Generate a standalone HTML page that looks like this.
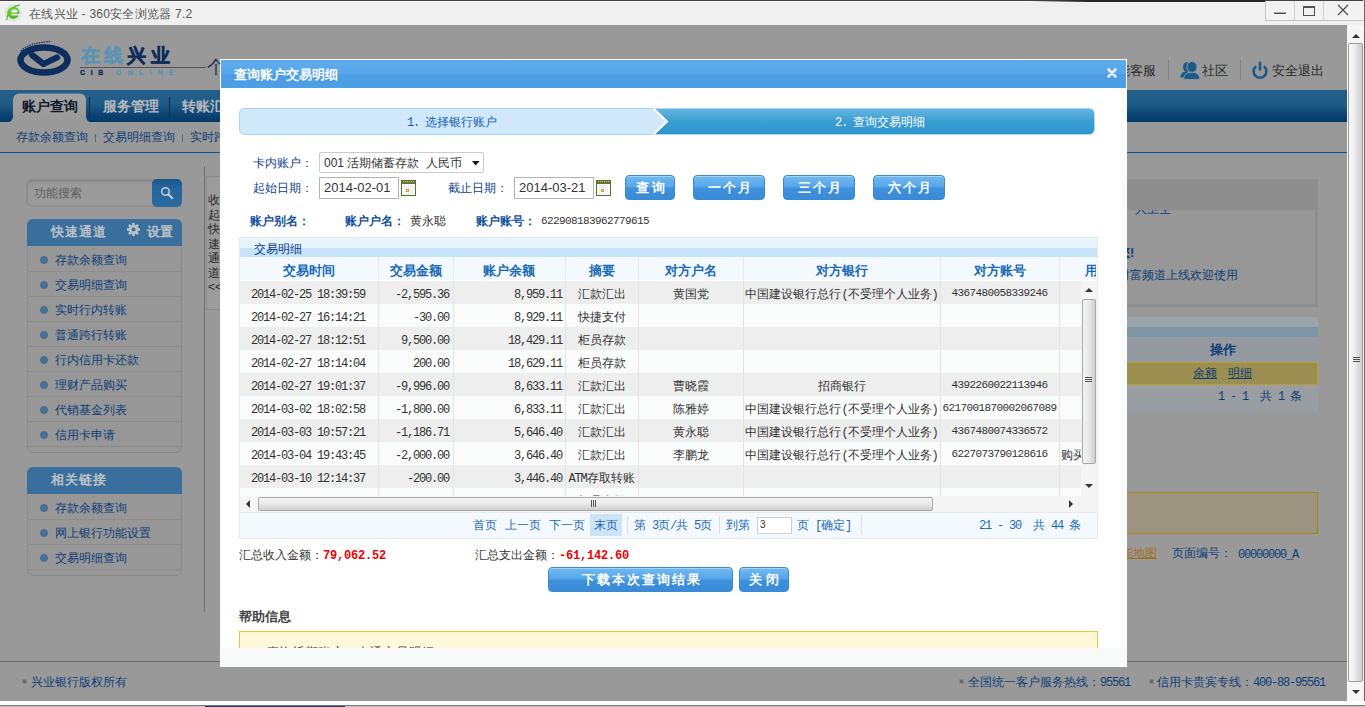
<!DOCTYPE html>
<html><head><meta charset="utf-8">
<style>
*{box-sizing:border-box}
html,body{margin:0;padding:0}
body{width:1365px;height:707px;overflow:hidden;position:relative;background:#fff;font-family:"Liberation Sans",sans-serif;font-size:12px;color:#333}
.a{position:absolute}
.t{position:absolute;white-space:nowrap;line-height:1}
.m{font-family:"Liberation Mono",monospace;letter-spacing:-1.2px}
</style></head><body>

<div class="a" style="left:0px;top:0px;width:1365px;height:25px;background:#f0f0f0;"></div>
<div class="a" style="left:0px;top:0px;width:1365px;height:1px;background:#444;"></div>
<div class="a" style="left:0px;top:1px;width:1365px;height:1px;background:#fafafa;"></div>
<div class="a" style="left:1030px;top:0px;width:235px;height:2px;background:linear-gradient(90deg,rgba(30,30,30,0),#262626 25%,#262626);"></div>
<svg class="a" style="left:0;top:0" width="26" height="25" viewBox="0 0 26 25">
 <defs><radialGradient id="eg" cx="0.4" cy="0.3" r="0.8"><stop offset="0" stop-color="#8ee048"/><stop offset="1" stop-color="#2cb010"/></radialGradient></defs>
 <circle cx="13.1" cy="12.8" r="7.5" fill="#f4f4f6" stroke="#c4c6d0" stroke-width="0.8"/>
 <circle cx="13.3" cy="12.8" r="6.1" fill="url(#eg)"/>
 <ellipse cx="14.4" cy="10.9" rx="3.2" ry="1.5" fill="#fff"/>
 <rect x="11.6" y="13.9" width="8.5" height="1.5" fill="#fff"/>
 <path d="M6.8 20.2 C7.2 12 12.5 6.2 20 5" fill="none" stroke="#58c828" stroke-width="1.3"/>
</svg>
<div class="t" style="left:29px;top:8px;font-size:12px;color:#555;letter-spacing:0.25px">在线兴业 - 360安全浏览器 7.2</div>
<div class="a" style="left:1265px;top:1px;width:99px;height:20px;background:#f2f2f2;border-left:1px solid #c4c4c4;border-bottom:1px solid #c4c4c4"></div>
<div class="a" style="left:1363px;top:0px;width:1px;height:707px;background:#f0f0f0;"></div>
<div class="a" style="left:1364px;top:0px;width:1px;height:707px;background:#6a6a6a;"></div>
<div class="a" style="left:1294px;top:1px;width:1px;height:19px;background:#d0d0d0;"></div>
<div class="a" style="left:1323px;top:1px;width:1px;height:19px;background:#d0d0d0;"></div>
<div class="a" style="left:1274px;top:13px;width:12px;height:1px;background:#505050;"></div>
<div class="a" style="left:1274px;top:12px;width:12px;height:1px;background:#a0a0a0;"></div>
<div class="a" style="left:1303px;top:6px;width:12px;height:10px;background:transparent;border:1px solid #505050;border-top-width:2px"></div>
<svg class="a" style="left:1337px;top:4px" width="12" height="12" viewBox="0 0 12 12"><path d="M1 1L11 11M11 1L1 11" stroke="#505050" stroke-width="1.3"/></svg>
<div class="a" style="left:0px;top:25px;width:1347px;height:676px;background:#999;"></div>
<svg class="a" style="left:14px;top:40px" width="62" height="40" viewBox="0 0 62 40">
 <ellipse cx="30" cy="20" rx="23.5" ry="12.5" fill="none" stroke="#0d2e5c" stroke-width="6.5"/>
 <path d="M18 15 L29.5 24 L43 17.5" fill="none" stroke="#0d2e5c" stroke-width="6.2" stroke-linejoin="round" stroke-linecap="round"/>
 <path d="M7 11 Q14 3 36 1.5" fill="none" stroke="#0d2e5c" stroke-width="1.3" stroke-dasharray="1.5 1"/>
</svg>
<div class="t" style="left:81px;top:46px;font-size:19px;color:#5a94b4;font-weight:bold;letter-spacing:4.2px;-webkit-text-stroke:0.5px currentColor">在线<span style="color:#0c2c5a">兴业</span></div>
<div class="a" style="left:80px;top:67px;width:126px;height:1px;background:#5a524e;"></div>
<div class="t" style="left:80px;top:69px;font-size:7px;color:#0c2c5a;font-weight:bold;letter-spacing:5.6px;-webkit-text-stroke:0.3px currentColor">CIB</div>
<div class="t" style="left:116px;top:69px;font-size:7px;color:#5a94b4;font-weight:bold;letter-spacing:6.2px;-webkit-text-stroke:0.3px currentColor">ONLINE</div>
<div class="t" style="left:207px;top:58px;font-size:18px;color:#1a2f55;">个</div>
<div class="t" style="left:1117px;top:64px;font-size:13px;color:#2a2a2a;">能客服</div>
<div class="a" style="left:1168px;top:60px;width:1px;height:20px;background:#808080;"></div>
<svg class="a" style="left:1180px;top:61px" width="20" height="19" viewBox="0 0 20 19">
 <ellipse cx="6.8" cy="6" rx="3.8" ry="4.8" fill="#1a5a88"/>
 <path d="M0.3 16.5 Q0.8 10.8 6 10.6 L8.5 11 L5 16.5 Z" fill="#1a5a88"/>
 <ellipse cx="12" cy="6" rx="5" ry="5.6" fill="#1a5a88" stroke="#999" stroke-width="0.9"/>
 <path d="M3.6 18.4 Q3.8 11.2 12 11.2 Q19.8 11.2 19.8 18.4 Z" fill="#1a5a88" stroke="#999" stroke-width="0.9"/>
</svg>
<div class="t" style="left:1202px;top:64px;font-size:13px;color:#2a2a2a;">社区</div>
<div class="a" style="left:1240px;top:60px;width:1px;height:20px;background:#808080;"></div>
<svg class="a" style="left:1251px;top:61px" width="18" height="19" viewBox="0 0 18 19">
 <path d="M5.2 5.2 A6.4 6.4 0 1 0 12.8 5.2" fill="none" stroke="#1d5a86" stroke-width="2.6"/>
 <rect x="7.7" y="0.5" width="2.6" height="9" fill="#1d5a86"/>
</svg>
<div class="t" style="left:1272px;top:64px;font-size:13px;color:#2a2a2a;">安全退出</div>
<div class="a" style="left:0px;top:90px;width:1347px;height:32px;background:linear-gradient(#235d89,#225c88 40%,#0a4272 80%,#003866);"></div>
<svg class="a" style="left:8px;top:92px" width="84" height="30" viewBox="0 0 84 30"><defs><linearGradient id="tg" x1="0" y1="0" x2="0" y2="1"><stop offset="0" stop-color="#a3a3a3"/><stop offset="1" stop-color="#999"/></linearGradient></defs><path d="M1 30 Q5 29 5 24 L5 8 Q5 1.5 12 1.5 L71 1.5 Q78 1.5 78 8 L78 24 Q78 29 82 30 Z" fill="url(#tg)"/></svg>
<div class="t" style="left:22px;top:99px;font-size:14px;color:#0e1a2c;font-weight:bold;">账户查询</div>
<div class="a" style="left:89px;top:97px;width:1px;height:20px;background:#0a2a4a;"></div>
<div class="t" style="left:103px;top:99px;font-size:14px;color:#b4b8bc;font-weight:bold;">服务管理</div>
<div class="a" style="left:169px;top:97px;width:1px;height:20px;background:#0a2a4a;"></div>
<div class="t" style="left:182px;top:99px;font-size:14px;color:#b4b8bc;font-weight:bold;">转账汇款</div>
<div class="t" style="left:16px;top:131px;font-size:12px;color:#0e3f78;">存款余额查询</div>
<div class="a" style="left:95px;top:134px;width:1px;height:8px;background:#4a6a8a;"></div>
<div class="t" style="left:103px;top:131px;font-size:12px;color:#0e3f78;">交易明细查询</div>
<div class="a" style="left:182px;top:134px;width:1px;height:8px;background:#4a6a8a;"></div>
<div class="t" style="left:190px;top:131px;font-size:12px;color:#0e3f78;">实时跨行</div>
<div class="a" style="left:0px;top:152px;width:1347px;height:1px;background:#17548e;"></div>
<div class="a" style="left:0px;top:153px;width:1347px;height:1px;background:#8e969e;"></div>
<div class="a" style="left:26px;top:179px;width:156px;height:28px;background:#9a9a9a;border-radius:6px;box-shadow:inset 0 1px 3px #7a7a7a;border:1px solid #8e8e8e"></div>
<div class="t" style="left:34px;top:187px;font-size:12px;color:#5e5e5e;">功能搜索</div>
<div class="a" style="left:152px;top:179px;width:30px;height:28px;background:linear-gradient(#1a5688,#2566a0 30%,#2a6aa0);border-radius:5px"></div>
<svg class="a" style="left:158px;top:184px" width="18" height="18" viewBox="0 0 18 18"><circle cx="7.5" cy="7.5" r="3.8" fill="none" stroke="#c4ccd4" stroke-width="1.6"/><path d="M10.3 10.3L14.3 14.3" stroke="#c4ccd4" stroke-width="2" stroke-linecap="round"/></svg>
<div class="a" style="left:27px;top:219px;width:155px;height:234px;background:#979797;border:1px solid #8a8a8a;border-radius:6px"></div>
<div class="a" style="left:27px;top:219px;width:155px;height:27px;background:#3a6e9c;border-radius:6px 6px 0 0"></div>
<div class="t" style="left:51px;top:225px;font-size:13px;color:#bcc2c8;font-weight:bold;letter-spacing:1px">快速通道</div>
<svg class="a" style="left:127px;top:223px" width="13" height="13" viewBox="0 0 13 13"><g fill="#bcc2c8"><circle cx="6.5" cy="6.5" r="4.6"/><rect x="5.2" y="0" width="2.6" height="13"/><rect x="0" y="5.2" width="13" height="2.6"/><rect x="5.2" y="0" width="2.6" height="13" transform="rotate(45 6.5 6.5)"/><rect x="5.2" y="0" width="2.6" height="13" transform="rotate(-45 6.5 6.5)"/></g><circle cx="6.5" cy="6.5" r="2" fill="#3a6e9c"/></svg>
<div class="t" style="left:147px;top:225px;font-size:13px;color:#bcc2c8;font-weight:bold;">设置</div>
<div class="a" style="left:28px;top:271px;width:153px;height:1px;background:#8c8c8c;"></div>
<div class="a" style="left:40px;top:256px;width:8px;height:8px;background:#3d72a8;border-radius:50%;border:1px solid #5a646e"></div>
<div class="t" style="left:55px;top:254px;font-size:12px;color:#0e3f78;">存款余额查询</div>
<div class="a" style="left:28px;top:296px;width:153px;height:1px;background:#8c8c8c;"></div>
<div class="a" style="left:40px;top:281px;width:8px;height:8px;background:#3d72a8;border-radius:50%;border:1px solid #5a646e"></div>
<div class="t" style="left:55px;top:279px;font-size:12px;color:#0e3f78;">交易明细查询</div>
<div class="a" style="left:28px;top:321px;width:153px;height:1px;background:#8c8c8c;"></div>
<div class="a" style="left:40px;top:306px;width:8px;height:8px;background:#3d72a8;border-radius:50%;border:1px solid #5a646e"></div>
<div class="t" style="left:55px;top:304px;font-size:12px;color:#0e3f78;">实时行内转账</div>
<div class="a" style="left:28px;top:346px;width:153px;height:1px;background:#8c8c8c;"></div>
<div class="a" style="left:40px;top:331px;width:8px;height:8px;background:#3d72a8;border-radius:50%;border:1px solid #5a646e"></div>
<div class="t" style="left:55px;top:329px;font-size:12px;color:#0e3f78;">普通跨行转账</div>
<div class="a" style="left:28px;top:371px;width:153px;height:1px;background:#8c8c8c;"></div>
<div class="a" style="left:40px;top:356px;width:8px;height:8px;background:#3d72a8;border-radius:50%;border:1px solid #5a646e"></div>
<div class="t" style="left:55px;top:354px;font-size:12px;color:#0e3f78;">行内信用卡还款</div>
<div class="a" style="left:28px;top:396px;width:153px;height:1px;background:#8c8c8c;"></div>
<div class="a" style="left:40px;top:381px;width:8px;height:8px;background:#3d72a8;border-radius:50%;border:1px solid #5a646e"></div>
<div class="t" style="left:55px;top:379px;font-size:12px;color:#0e3f78;">理财产品购买</div>
<div class="a" style="left:28px;top:421px;width:153px;height:1px;background:#8c8c8c;"></div>
<div class="a" style="left:40px;top:406px;width:8px;height:8px;background:#3d72a8;border-radius:50%;border:1px solid #5a646e"></div>
<div class="t" style="left:55px;top:404px;font-size:12px;color:#0e3f78;">代销基金列表</div>
<div class="a" style="left:28px;top:446px;width:153px;height:1px;background:#8c8c8c;"></div>
<div class="a" style="left:40px;top:431px;width:8px;height:8px;background:#3d72a8;border-radius:50%;border:1px solid #5a646e"></div>
<div class="t" style="left:55px;top:429px;font-size:12px;color:#0e3f78;">信用卡申请</div>
<div class="a" style="left:27px;top:467px;width:155px;height:109px;background:#979797;border:1px solid #8a8a8a;border-radius:6px"></div>
<div class="a" style="left:27px;top:467px;width:155px;height:27px;background:#3a6e9c;border-radius:6px 6px 0 0"></div>
<div class="t" style="left:51px;top:473px;font-size:13px;color:#bcc2c8;font-weight:bold;letter-spacing:1px">相关链接</div>
<div class="a" style="left:28px;top:519px;width:153px;height:1px;background:#8c8c8c;"></div>
<div class="a" style="left:40px;top:504px;width:8px;height:8px;background:#3d72a8;border-radius:50%;border:1px solid #5a646e"></div>
<div class="t" style="left:55px;top:502px;font-size:12px;color:#0e3f78;">存款余额查询</div>
<div class="a" style="left:28px;top:544px;width:153px;height:1px;background:#8c8c8c;"></div>
<div class="a" style="left:40px;top:529px;width:8px;height:8px;background:#3d72a8;border-radius:50%;border:1px solid #5a646e"></div>
<div class="t" style="left:55px;top:527px;font-size:12px;color:#0e3f78;">网上银行功能设置</div>
<div class="a" style="left:28px;top:569px;width:153px;height:1px;background:#8c8c8c;"></div>
<div class="a" style="left:40px;top:554px;width:8px;height:8px;background:#3d72a8;border-radius:50%;border:1px solid #5a646e"></div>
<div class="t" style="left:55px;top:552px;font-size:12px;color:#0e3f78;">交易明细查询</div>
<div class="a" style="left:204px;top:166px;width:1px;height:446px;background:#6e6e6e;"></div>
<div class="a" style="left:206px;top:176px;width:20px;height:134px;background:#9c9c9c;border:1px solid #8a8a8a"></div>
<div class="t" style="left:208px;top:193px;font-size:12px;color:#2a2a2a;line-height:14.5px;white-space:normal;width:13px">收起快速通道&lt;&lt;</div>
<div class="a" style="left:1127px;top:179px;width:191px;height:128px;background:#8e8e8e;"></div>
<div class="a" style="left:1127px;top:210px;width:188px;height:94px;background:#979797;"></div>
<div class="a" style="left:1127px;top:210px;width:188px;height:6px;overflow:hidden"><div class="t" style="left:8px;top:-7px;font-size:12px;color:#0e3f78">人卫生</div></div>
<div class="t" style="left:1117px;top:246px;font-size:13px;color:#0e3f78;font-weight:bold;">您!</div>
<div class="t" style="left:1118px;top:269px;font-size:12px;color:#0e3f78;">财富频道上线欢迎使用</div>
<div class="a" style="left:1127px;top:317px;width:191px;height:95px;background:#999;border-right:1px solid #8e8e8e;border-bottom:1px solid #8e8e8e"></div>
<div class="a" style="left:1127px;top:317px;width:191px;height:10px;background:#9aa4aa;"></div>
<div class="a" style="left:1127px;top:327px;width:191px;height:10px;background:#7e96a4;"></div>
<div class="a" style="left:1127px;top:337px;width:191px;height:25px;background:#959aa0;"></div>
<div class="t" style="left:1210px;top:343px;font-size:13px;color:#0e3f78;font-weight:bold;">操作</div>
<div class="a" style="left:1127px;top:362px;width:191px;height:23px;background:#9a8e50;border:1px solid #b89e30;border-left:none"></div>
<div class="t" style="left:1193px;top:367px;font-size:12px;color:#0e3f78;text-decoration:underline">余额</div>
<div class="t" style="left:1228px;top:367px;font-size:12px;color:#0e3f78;text-decoration:underline">明细</div>
<div class="a" style="left:1127px;top:385px;width:191px;height:27px;background:#9a9ea2;"></div>
<div class="t" style="left:1218px;top:390px;font-size:12px;color:#0e3f78;"><span class="m">1&#160;-&#160;1&#160;&#160;</span>共<span class="m">&#160;1&#160;</span>条</div>
<div class="a" style="left:1127px;top:492px;width:191px;height:42px;background:#9a9480;border:1px solid #a08a20;border-left:none"></div>
<div class="t" style="left:1109px;top:547px;font-size:12px;color:#a07020;text-decoration:underline">功能地图</div>
<div class="t" style="left:1172px;top:547px;font-size:12px;color:#0e3f78;">页面编号：</div>
<div class="t" style="left:1238px;top:548px;font-size:12px;color:#0e3f78;"><span class="m">00000000_A</span></div>
<div class="a" style="left:0px;top:661px;width:1347px;height:1px;background:#6e6e6e;"></div>
<div class="a" style="left:22px;top:679px;width:5px;height:5px;background:#6a6a6a;border:1px solid #888"></div>
<div class="a" style="left:959px;top:679px;width:5px;height:5px;background:#6a6a6a;border:1px solid #888"></div>
<div class="a" style="left:1149px;top:679px;width:5px;height:5px;background:#6a6a6a;border:1px solid #888"></div>
<div class="t" style="left:31px;top:676px;font-size:12px;color:#0e3f78;">兴业银行版权所有</div>
<div class="t" style="left:968px;top:676px;font-size:12px;color:#0e3f78;">全国统一客户服务热线：<span class="m">95561</span></div>
<div class="t" style="left:1157px;top:676px;font-size:12px;color:#0e3f78;">信用卡贵宾专线：<span class="m">400-88-95561</span></div>
<div class="a" style="left:1347px;top:25px;width:16px;height:676px;background:#f6f6f6;"></div>
<svg class="a" style="left:1352px;top:33px" width="8" height="5" viewBox="0 0 8 5"><path d="M0 5L4 1L8 5Z" fill="#333"/></svg>
<div class="a" style="left:1348px;top:43px;width:15px;height:639px;background:linear-gradient(90deg,#fafafa,#ececec 45%,#d8d8dc 75%,#cfcfd4);border:1px solid #9c9c9c;border-radius:2px"></div>
<div class="a" style="left:1353px;top:357px;width:7px;height:1px;background:#555;box-shadow:0 2px 0 #555,0 4px 0 #555"></div>
<svg class="a" style="left:1352px;top:690px" width="8" height="5" viewBox="0 0 8 5"><path d="M0 0L8 0L4 4Z" fill="#333"/></svg>
<div class="a" style="left:0px;top:701px;width:1365px;height:4px;background:#fdfdfd;"></div>
<div class="a" style="left:0px;top:705px;width:1365px;height:1px;background:#7a7a7a;"></div>
<div class="a" style="left:0px;top:706px;width:1365px;height:1px;background:#c4c4c4;"></div>
<div class="a" style="left:205px;top:706px;width:140px;height:1px;background:#2c2a6a;"></div>
<div class="a" style="left:220px;top:59px;width:907px;height:608px;background:#fff;border:1px solid #fff"></div>
<div class="a" style="left:1121px;top:88px;width:5px;height:578px;background:#f8fafb;"></div>
<div class="a" style="left:221px;top:60px;width:905px;height:28px;background:linear-gradient(#5eacec,#56a6ea 50%,#4c9de4 52%,#4e9ee6);"></div>
<div class="t" style="left:234px;top:68px;font-size:13px;color:#fff;font-weight:bold;">查询账户交易明细</div>
<svg class="a" style="left:1107px;top:68px" width="10" height="10" viewBox="0 0 10 10"><path d="M1.5 1.5L8.5 8.5M8.5 1.5L1.5 8.5" stroke="#e8eef6" stroke-width="2.6" stroke-linecap="round"/></svg>
<svg class="a" style="left:239px;top:108px" width="856" height="27" viewBox="0 0 856 27">
 <defs><linearGradient id="sg" x1="0" y1="0" x2="0" y2="1"><stop offset="0" stop-color="#64b4de"/><stop offset="0.5" stop-color="#3a9ed2"/><stop offset="1" stop-color="#2e96ce"/></linearGradient></defs>
 <rect x="0.5" y="0.5" width="855" height="26" rx="5" fill="#d0e8fa" stroke="#a6d6f6"/>
 <path d="M416 1 L429 13.5 L416 26 L850 26 Q855 26 855 21 L855 6 Q855 1 850 1 Z" fill="url(#sg)"/>
 <path d="M414.5 0.5 L428 13.5 L414.5 26.5" fill="none" stroke="#fff" stroke-width="2"/>
</svg>
<div class="t" style="left:407px;top:116px;font-size:12px;color:#1464b4;"><span class="m">1.&#160;</span>选择银行账户</div>
<div class="t" style="left:835px;top:116px;font-size:12px;color:#fff;"><span class="m">2.&#160;</span>查询交易明细</div>
<div class="t" style="left:253px;top:157px;font-size:12px;color:#0f3e8e;">卡内账户：</div>
<div class="a" style="left:319px;top:152px;width:165px;height:21px;background:#fff;border:1px solid #c6ccd4;border-radius:2px"></div>
<div class="t" style="left:324px;top:157px;font-size:12px;color:#333;">001 活期储蓄存款 &#160;人民币</div>
<svg class="a" style="left:472px;top:161px" width="8" height="5" viewBox="0 0 8 5"><path d="M0 0H7.5L3.75 4.5Z" fill="#111"/></svg>
<div class="t" style="left:253px;top:182px;font-size:12px;color:#0f3e8e;">起始日期：</div>
<div class="a" style="left:319px;top:177px;width:80px;height:22px;background:#fff;border:1px solid #aeb4ba"></div>
<div class="t" style="left:324px;top:181px;font-size:13px;color:#333;">2014-02-01</div>
<div class="t" style="left:448px;top:182px;font-size:12px;color:#0f3e8e;">截止日期：</div>
<div class="a" style="left:514px;top:177px;width:80px;height:22px;background:#fff;border:1px solid #aeb4ba"></div>
<div class="t" style="left:519px;top:181px;font-size:13px;color:#333;">2014-03-21</div>
<svg class="a" style="left:401px;top:180px" width="15" height="16" viewBox="0 0 15 16"><rect x="0.5" y="0.5" width="14" height="15" fill="#fff" stroke="#4a7a1a"/><rect x="1" y="1" width="13" height="3" fill="#7a6a3a"/><g fill="#b8d890"><rect x="2" y="1" width="1" height="1"/><rect x="4" y="1" width="1" height="1"/><rect x="6" y="1" width="1" height="1"/><rect x="8" y="1" width="1" height="1"/><rect x="10" y="1" width="1" height="1"/><rect x="12" y="1" width="1" height="1"/></g><rect x="3" y="5" width="9" height="9" fill="#d8e4f0"/><g fill="#fff"><rect x="4" y="5" width="1" height="9"/><rect x="6" y="5" width="1" height="9"/><rect x="8" y="5" width="1" height="9"/><rect x="10" y="5" width="1" height="9"/><rect x="3" y="6" width="9" height="1"/><rect x="3" y="8" width="9" height="1"/><rect x="3" y="10" width="9" height="1"/><rect x="3" y="12" width="9" height="1"/></g><rect x="5" y="9" width="3" height="3" fill="#f08838"/><rect x="6" y="10" width="1" height="1" fill="#fff"/></svg>
<svg class="a" style="left:596px;top:180px" width="15" height="16" viewBox="0 0 15 16"><rect x="0.5" y="0.5" width="14" height="15" fill="#fff" stroke="#4a7a1a"/><rect x="1" y="1" width="13" height="3" fill="#7a6a3a"/><g fill="#b8d890"><rect x="2" y="1" width="1" height="1"/><rect x="4" y="1" width="1" height="1"/><rect x="6" y="1" width="1" height="1"/><rect x="8" y="1" width="1" height="1"/><rect x="10" y="1" width="1" height="1"/><rect x="12" y="1" width="1" height="1"/></g><rect x="3" y="5" width="9" height="9" fill="#d8e4f0"/><g fill="#fff"><rect x="4" y="5" width="1" height="9"/><rect x="6" y="5" width="1" height="9"/><rect x="8" y="5" width="1" height="9"/><rect x="10" y="5" width="1" height="9"/><rect x="3" y="6" width="9" height="1"/><rect x="3" y="8" width="9" height="1"/><rect x="3" y="10" width="9" height="1"/><rect x="3" y="12" width="9" height="1"/></g><rect x="5" y="9" width="3" height="3" fill="#f08838"/><rect x="6" y="10" width="1" height="1" fill="#fff"/></svg>
<div class="a" style="left:625px;top:175px;width:50px;height:25px;background:linear-gradient(#72baf0,#56a6ea 45%,#3e90dc 55%,#3a8ad8);border:1px solid #3a88d0;border-radius:4px;box-shadow:inset 0 1px 0 #a0d4f8"></div>
<div class="t" style="left:625px;top:181px;width:50px;text-align:center;font-size:13px;font-weight:bold;color:#fff;letter-spacing:3px;text-indent:3px">查询</div>
<div class="a" style="left:693px;top:175px;width:72px;height:25px;background:linear-gradient(#72baf0,#56a6ea 45%,#3e90dc 55%,#3a8ad8);border:1px solid #3a88d0;border-radius:4px;box-shadow:inset 0 1px 0 #a0d4f8"></div>
<div class="t" style="left:693px;top:181px;width:72px;text-align:center;font-size:13px;font-weight:bold;color:#fff;letter-spacing:2px;text-indent:2px">一个月</div>
<div class="a" style="left:783px;top:175px;width:72px;height:25px;background:linear-gradient(#72baf0,#56a6ea 45%,#3e90dc 55%,#3a8ad8);border:1px solid #3a88d0;border-radius:4px;box-shadow:inset 0 1px 0 #a0d4f8"></div>
<div class="t" style="left:783px;top:181px;width:72px;text-align:center;font-size:13px;font-weight:bold;color:#fff;letter-spacing:2px;text-indent:2px">三个月</div>
<div class="a" style="left:873px;top:175px;width:72px;height:25px;background:linear-gradient(#72baf0,#56a6ea 45%,#3e90dc 55%,#3a8ad8);border:1px solid #3a88d0;border-radius:4px;box-shadow:inset 0 1px 0 #a0d4f8"></div>
<div class="t" style="left:873px;top:181px;width:72px;text-align:center;font-size:13px;font-weight:bold;color:#fff;letter-spacing:2px;text-indent:2px">六个月</div>
<div class="t" style="left:250px;top:215px;font-size:12px;color:#12509e;font-weight:bold;">账户别名：</div>
<div class="t" style="left:345px;top:215px;font-size:12px;color:#12509e;font-weight:bold;">账户户名：<span style="font-weight:normal;color:#333;margin-left:5px">黄永聪</span></div>
<div class="t" style="left:476px;top:215px;font-size:12px;color:#12509e;font-weight:bold;">账户账号：</div>
<div class="t" style="left:541px;top:216px;font-size:11px;color:#333;font-family:'Liberation Mono',monospace;letter-spacing:-0.6px">622908183962779615</div>
<div class="a" style="left:239px;top:237px;width:859px;height:302px;background:#fff;border:1px solid #e4ecf2"></div>
<div class="a" style="left:240px;top:238px;width:857px;height:10px;background:#e6f4fc;"></div>
<div class="a" style="left:240px;top:248px;width:857px;height:9px;background:#c8e4f8;"></div>
<div class="t" style="left:254px;top:243px;font-size:12px;color:#0e3c8a;">交易明细</div>
<div class="a" style="left:240px;top:257px;width:857px;height:23px;background:#f4f9fd;"></div>
<div class="t" style="left:240px;top:264px;width:138px;text-align:center;font-size:13px;font-weight:bold;color:#1a6ab8">交易时间</div>
<div class="a" style="left:378px;top:257px;width:1px;height:238px;background:#e6eaee;"></div>
<div class="t" style="left:378px;top:264px;width:75px;text-align:center;font-size:13px;font-weight:bold;color:#1a6ab8">交易金额</div>
<div class="a" style="left:453px;top:257px;width:1px;height:238px;background:#e6eaee;"></div>
<div class="t" style="left:453px;top:264px;width:112px;text-align:center;font-size:13px;font-weight:bold;color:#1a6ab8">账户余额</div>
<div class="a" style="left:565px;top:257px;width:1px;height:238px;background:#e6eaee;"></div>
<div class="t" style="left:565px;top:264px;width:73px;text-align:center;font-size:13px;font-weight:bold;color:#1a6ab8">摘要</div>
<div class="a" style="left:638px;top:257px;width:1px;height:238px;background:#e6eaee;"></div>
<div class="t" style="left:638px;top:264px;width:105px;text-align:center;font-size:13px;font-weight:bold;color:#1a6ab8">对方户名</div>
<div class="a" style="left:743px;top:257px;width:1px;height:238px;background:#e6eaee;"></div>
<div class="t" style="left:743px;top:264px;width:197px;text-align:center;font-size:13px;font-weight:bold;color:#1a6ab8">对方银行</div>
<div class="a" style="left:940px;top:257px;width:1px;height:238px;background:#e6eaee;"></div>
<div class="t" style="left:940px;top:264px;width:119px;text-align:center;font-size:13px;font-weight:bold;color:#1a6ab8">对方账号</div>
<div class="a" style="left:1059px;top:257px;width:1px;height:238px;background:#e6eaee;"></div>
<div class="t" style="left:1085px;top:264px;font-size:13px;font-weight:bold;color:#1a6ab8;width:11px;overflow:hidden">用途</div>
<div class="a" style="left:240px;top:281px;width:841px;height:215px;overflow:hidden">
<div class="a" style="left:0px;top:0px;width:841px;height:23px;background:#eeeeee;"></div>
<div class="a" style="left:138px;top:0px;width:1px;height:23px;background:#e4e4e4;"></div>
<div class="a" style="left:213px;top:0px;width:1px;height:23px;background:#e4e4e4;"></div>
<div class="a" style="left:325px;top:0px;width:1px;height:23px;background:#e4e4e4;"></div>
<div class="a" style="left:398px;top:0px;width:1px;height:23px;background:#e4e4e4;"></div>
<div class="a" style="left:503px;top:0px;width:1px;height:23px;background:#e4e4e4;"></div>
<div class="a" style="left:700px;top:0px;width:1px;height:23px;background:#e4e4e4;"></div>
<div class="a" style="left:819px;top:0px;width:1px;height:23px;background:#e4e4e4;"></div>
<div class="t" style="left:11px;top:7px;font-size:12px;color:#333;"><span class="m">2014-02-25&#160;18:39:59</span></div>
<div class="t" style="left:138px;top:7px;width:71px;text-align:right;font-size:12px;color:#333;"><span class="m">-2,595.36</span></div>
<div class="t" style="left:213px;top:7px;width:109px;text-align:right;font-size:12px;color:#333;"><span class="m">8,959.11</span></div>
<div class="t" style="left:325px;top:7px;width:73px;text-align:center;font-size:12px;color:#333;">汇款汇出</div>
<div class="t" style="left:398px;top:7px;width:105px;text-align:center;font-size:12px;color:#333;">黄国党</div>
<div class="t" style="left:503px;top:7px;width:197px;text-align:center;font-size:12px;color:#333;">中国建设银行总行<span class="m">(</span>不受理个人业务<span class="m">)</span></div>
<div class="t" style="left:700px;top:7px;width:119px;text-align:center;font-size:11px;color:#333;font-family:'Liberation Mono',monospace;letter-spacing:-0.6px">4367480058339246</div>
<div class="a" style="left:0px;top:23px;width:841px;height:23px;background:#fafcfc;"></div>
<div class="a" style="left:138px;top:23px;width:1px;height:23px;background:#e4e4e4;"></div>
<div class="a" style="left:213px;top:23px;width:1px;height:23px;background:#e4e4e4;"></div>
<div class="a" style="left:325px;top:23px;width:1px;height:23px;background:#e4e4e4;"></div>
<div class="a" style="left:398px;top:23px;width:1px;height:23px;background:#e4e4e4;"></div>
<div class="a" style="left:503px;top:23px;width:1px;height:23px;background:#e4e4e4;"></div>
<div class="a" style="left:700px;top:23px;width:1px;height:23px;background:#e4e4e4;"></div>
<div class="a" style="left:819px;top:23px;width:1px;height:23px;background:#e4e4e4;"></div>
<div class="t" style="left:11px;top:30px;font-size:12px;color:#333;"><span class="m">2014-02-27&#160;16:14:21</span></div>
<div class="t" style="left:138px;top:30px;width:71px;text-align:right;font-size:12px;color:#333;"><span class="m">-30.00</span></div>
<div class="t" style="left:213px;top:30px;width:109px;text-align:right;font-size:12px;color:#333;"><span class="m">8,929.11</span></div>
<div class="t" style="left:325px;top:30px;width:73px;text-align:center;font-size:12px;color:#333;">快捷支付</div>
<div class="a" style="left:0px;top:46px;width:841px;height:23px;background:#eeeeee;"></div>
<div class="a" style="left:138px;top:46px;width:1px;height:23px;background:#e4e4e4;"></div>
<div class="a" style="left:213px;top:46px;width:1px;height:23px;background:#e4e4e4;"></div>
<div class="a" style="left:325px;top:46px;width:1px;height:23px;background:#e4e4e4;"></div>
<div class="a" style="left:398px;top:46px;width:1px;height:23px;background:#e4e4e4;"></div>
<div class="a" style="left:503px;top:46px;width:1px;height:23px;background:#e4e4e4;"></div>
<div class="a" style="left:700px;top:46px;width:1px;height:23px;background:#e4e4e4;"></div>
<div class="a" style="left:819px;top:46px;width:1px;height:23px;background:#e4e4e4;"></div>
<div class="t" style="left:11px;top:53px;font-size:12px;color:#333;"><span class="m">2014-02-27&#160;18:12:51</span></div>
<div class="t" style="left:138px;top:53px;width:71px;text-align:right;font-size:12px;color:#333;"><span class="m">9,500.00</span></div>
<div class="t" style="left:213px;top:53px;width:109px;text-align:right;font-size:12px;color:#333;"><span class="m">18,429.11</span></div>
<div class="t" style="left:325px;top:53px;width:73px;text-align:center;font-size:12px;color:#333;">柜员存款</div>
<div class="a" style="left:0px;top:69px;width:841px;height:23px;background:#fafcfc;"></div>
<div class="a" style="left:138px;top:69px;width:1px;height:23px;background:#e4e4e4;"></div>
<div class="a" style="left:213px;top:69px;width:1px;height:23px;background:#e4e4e4;"></div>
<div class="a" style="left:325px;top:69px;width:1px;height:23px;background:#e4e4e4;"></div>
<div class="a" style="left:398px;top:69px;width:1px;height:23px;background:#e4e4e4;"></div>
<div class="a" style="left:503px;top:69px;width:1px;height:23px;background:#e4e4e4;"></div>
<div class="a" style="left:700px;top:69px;width:1px;height:23px;background:#e4e4e4;"></div>
<div class="a" style="left:819px;top:69px;width:1px;height:23px;background:#e4e4e4;"></div>
<div class="t" style="left:11px;top:76px;font-size:12px;color:#333;"><span class="m">2014-02-27&#160;18:14:04</span></div>
<div class="t" style="left:138px;top:76px;width:71px;text-align:right;font-size:12px;color:#333;"><span class="m">200.00</span></div>
<div class="t" style="left:213px;top:76px;width:109px;text-align:right;font-size:12px;color:#333;"><span class="m">18,629.11</span></div>
<div class="t" style="left:325px;top:76px;width:73px;text-align:center;font-size:12px;color:#333;">柜员存款</div>
<div class="a" style="left:0px;top:92px;width:841px;height:23px;background:#eeeeee;"></div>
<div class="a" style="left:138px;top:92px;width:1px;height:23px;background:#e4e4e4;"></div>
<div class="a" style="left:213px;top:92px;width:1px;height:23px;background:#e4e4e4;"></div>
<div class="a" style="left:325px;top:92px;width:1px;height:23px;background:#e4e4e4;"></div>
<div class="a" style="left:398px;top:92px;width:1px;height:23px;background:#e4e4e4;"></div>
<div class="a" style="left:503px;top:92px;width:1px;height:23px;background:#e4e4e4;"></div>
<div class="a" style="left:700px;top:92px;width:1px;height:23px;background:#e4e4e4;"></div>
<div class="a" style="left:819px;top:92px;width:1px;height:23px;background:#e4e4e4;"></div>
<div class="t" style="left:11px;top:99px;font-size:12px;color:#333;"><span class="m">2014-02-27&#160;19:01:37</span></div>
<div class="t" style="left:138px;top:99px;width:71px;text-align:right;font-size:12px;color:#333;"><span class="m">-9,996.00</span></div>
<div class="t" style="left:213px;top:99px;width:109px;text-align:right;font-size:12px;color:#333;"><span class="m">8,633.11</span></div>
<div class="t" style="left:325px;top:99px;width:73px;text-align:center;font-size:12px;color:#333;">汇款汇出</div>
<div class="t" style="left:398px;top:99px;width:105px;text-align:center;font-size:12px;color:#333;">曹晓霞</div>
<div class="t" style="left:503px;top:99px;width:197px;text-align:center;font-size:12px;color:#333;">招商银行</div>
<div class="t" style="left:700px;top:99px;width:119px;text-align:center;font-size:11px;color:#333;font-family:'Liberation Mono',monospace;letter-spacing:-0.6px">4392260022113946</div>
<div class="a" style="left:0px;top:115px;width:841px;height:23px;background:#fafcfc;"></div>
<div class="a" style="left:138px;top:115px;width:1px;height:23px;background:#e4e4e4;"></div>
<div class="a" style="left:213px;top:115px;width:1px;height:23px;background:#e4e4e4;"></div>
<div class="a" style="left:325px;top:115px;width:1px;height:23px;background:#e4e4e4;"></div>
<div class="a" style="left:398px;top:115px;width:1px;height:23px;background:#e4e4e4;"></div>
<div class="a" style="left:503px;top:115px;width:1px;height:23px;background:#e4e4e4;"></div>
<div class="a" style="left:700px;top:115px;width:1px;height:23px;background:#e4e4e4;"></div>
<div class="a" style="left:819px;top:115px;width:1px;height:23px;background:#e4e4e4;"></div>
<div class="t" style="left:11px;top:122px;font-size:12px;color:#333;"><span class="m">2014-03-02&#160;18:02:58</span></div>
<div class="t" style="left:138px;top:122px;width:71px;text-align:right;font-size:12px;color:#333;"><span class="m">-1,800.00</span></div>
<div class="t" style="left:213px;top:122px;width:109px;text-align:right;font-size:12px;color:#333;"><span class="m">6,833.11</span></div>
<div class="t" style="left:325px;top:122px;width:73px;text-align:center;font-size:12px;color:#333;">汇款汇出</div>
<div class="t" style="left:398px;top:122px;width:105px;text-align:center;font-size:12px;color:#333;">陈雅婷</div>
<div class="t" style="left:503px;top:122px;width:197px;text-align:center;font-size:12px;color:#333;">中国建设银行总行<span class="m">(</span>不受理个人业务<span class="m">)</span></div>
<div class="t" style="left:700px;top:122px;width:119px;text-align:center;font-size:11px;color:#333;font-family:'Liberation Mono',monospace;letter-spacing:-0.6px">6217001870002067089</div>
<div class="a" style="left:0px;top:138px;width:841px;height:23px;background:#eeeeee;"></div>
<div class="a" style="left:138px;top:138px;width:1px;height:23px;background:#e4e4e4;"></div>
<div class="a" style="left:213px;top:138px;width:1px;height:23px;background:#e4e4e4;"></div>
<div class="a" style="left:325px;top:138px;width:1px;height:23px;background:#e4e4e4;"></div>
<div class="a" style="left:398px;top:138px;width:1px;height:23px;background:#e4e4e4;"></div>
<div class="a" style="left:503px;top:138px;width:1px;height:23px;background:#e4e4e4;"></div>
<div class="a" style="left:700px;top:138px;width:1px;height:23px;background:#e4e4e4;"></div>
<div class="a" style="left:819px;top:138px;width:1px;height:23px;background:#e4e4e4;"></div>
<div class="t" style="left:11px;top:145px;font-size:12px;color:#333;"><span class="m">2014-03-03&#160;10:57:21</span></div>
<div class="t" style="left:138px;top:145px;width:71px;text-align:right;font-size:12px;color:#333;"><span class="m">-1,186.71</span></div>
<div class="t" style="left:213px;top:145px;width:109px;text-align:right;font-size:12px;color:#333;"><span class="m">5,646.40</span></div>
<div class="t" style="left:325px;top:145px;width:73px;text-align:center;font-size:12px;color:#333;">汇款汇出</div>
<div class="t" style="left:398px;top:145px;width:105px;text-align:center;font-size:12px;color:#333;">黄永聪</div>
<div class="t" style="left:503px;top:145px;width:197px;text-align:center;font-size:12px;color:#333;">中国建设银行总行<span class="m">(</span>不受理个人业务<span class="m">)</span></div>
<div class="t" style="left:700px;top:145px;width:119px;text-align:center;font-size:11px;color:#333;font-family:'Liberation Mono',monospace;letter-spacing:-0.6px">4367480074336572</div>
<div class="a" style="left:0px;top:161px;width:841px;height:23px;background:#fafcfc;"></div>
<div class="a" style="left:138px;top:161px;width:1px;height:23px;background:#e4e4e4;"></div>
<div class="a" style="left:213px;top:161px;width:1px;height:23px;background:#e4e4e4;"></div>
<div class="a" style="left:325px;top:161px;width:1px;height:23px;background:#e4e4e4;"></div>
<div class="a" style="left:398px;top:161px;width:1px;height:23px;background:#e4e4e4;"></div>
<div class="a" style="left:503px;top:161px;width:1px;height:23px;background:#e4e4e4;"></div>
<div class="a" style="left:700px;top:161px;width:1px;height:23px;background:#e4e4e4;"></div>
<div class="a" style="left:819px;top:161px;width:1px;height:23px;background:#e4e4e4;"></div>
<div class="t" style="left:11px;top:168px;font-size:12px;color:#333;"><span class="m">2014-03-04&#160;19:43:45</span></div>
<div class="t" style="left:138px;top:168px;width:71px;text-align:right;font-size:12px;color:#333;"><span class="m">-2,000.00</span></div>
<div class="t" style="left:213px;top:168px;width:109px;text-align:right;font-size:12px;color:#333;"><span class="m">3,646.40</span></div>
<div class="t" style="left:325px;top:168px;width:73px;text-align:center;font-size:12px;color:#333;">汇款汇出</div>
<div class="t" style="left:398px;top:168px;width:105px;text-align:center;font-size:12px;color:#333;">李鹏龙</div>
<div class="t" style="left:503px;top:168px;width:197px;text-align:center;font-size:12px;color:#333;">中国建设银行总行<span class="m">(</span>不受理个人业务<span class="m">)</span></div>
<div class="t" style="left:700px;top:168px;width:119px;text-align:center;font-size:11px;color:#333;font-family:'Liberation Mono',monospace;letter-spacing:-0.6px">6227073790128616</div>
<div class="t" style="left:821px;top:168px;font-size:12px;color:#333;">购买</div>
<div class="a" style="left:0px;top:184px;width:841px;height:23px;background:#eeeeee;"></div>
<div class="a" style="left:138px;top:184px;width:1px;height:23px;background:#e4e4e4;"></div>
<div class="a" style="left:213px;top:184px;width:1px;height:23px;background:#e4e4e4;"></div>
<div class="a" style="left:325px;top:184px;width:1px;height:23px;background:#e4e4e4;"></div>
<div class="a" style="left:398px;top:184px;width:1px;height:23px;background:#e4e4e4;"></div>
<div class="a" style="left:503px;top:184px;width:1px;height:23px;background:#e4e4e4;"></div>
<div class="a" style="left:700px;top:184px;width:1px;height:23px;background:#e4e4e4;"></div>
<div class="a" style="left:819px;top:184px;width:1px;height:23px;background:#e4e4e4;"></div>
<div class="t" style="left:11px;top:191px;font-size:12px;color:#333;"><span class="m">2014-03-10&#160;12:14:37</span></div>
<div class="t" style="left:138px;top:191px;width:71px;text-align:right;font-size:12px;color:#333;"><span class="m">-200.00</span></div>
<div class="t" style="left:213px;top:191px;width:109px;text-align:right;font-size:12px;color:#333;"><span class="m">3,446.40</span></div>
<div class="t" style="left:325px;top:191px;width:73px;text-align:center;font-size:12px;color:#333;"><span class="m">ATM</span>存取转账</div>
<div class="a" style="left:0px;top:207px;width:841px;height:23px;background:#fafcfc;"></div>
<div class="a" style="left:138px;top:207px;width:1px;height:23px;background:#e4e4e4;"></div>
<div class="a" style="left:213px;top:207px;width:1px;height:23px;background:#e4e4e4;"></div>
<div class="a" style="left:325px;top:207px;width:1px;height:23px;background:#e4e4e4;"></div>
<div class="a" style="left:398px;top:207px;width:1px;height:23px;background:#e4e4e4;"></div>
<div class="a" style="left:503px;top:207px;width:1px;height:23px;background:#e4e4e4;"></div>
<div class="a" style="left:700px;top:207px;width:1px;height:23px;background:#e4e4e4;"></div>
<div class="a" style="left:819px;top:207px;width:1px;height:23px;background:#e4e4e4;"></div>
<div class="t" style="left:325px;top:214px;width:73px;text-align:center;font-size:12px;color:#333;">柜员存款</div>
</div>
<div class="a" style="left:1081px;top:281px;width:16px;height:215px;background:#f5f5f5;"></div>
<svg class="a" style="left:1085px;top:287px" width="8" height="5" viewBox="0 0 8 5"><path d="M0 5L4 1L8 5Z" fill="#333"/></svg>
<div class="a" style="left:1082px;top:299px;width:14px;height:165px;background:linear-gradient(90deg,#f4f4f4,#e8e8e8 50%,#cfcfd4);border:1px solid #a8a8a8;border-radius:2px"></div>
<div class="a" style="left:1085px;top:377px;width:7px;height:1px;background:#555;box-shadow:0 2px 0 #555,0 4px 0 #555"></div>
<svg class="a" style="left:1085px;top:484px" width="8" height="5" viewBox="0 0 8 5"><path d="M0 0L8 0L4 4Z" fill="#333"/></svg>
<div class="a" style="left:240px;top:496px;width:857px;height:16px;background:#f5f5f5;"></div>
<svg class="a" style="left:245px;top:500px" width="5" height="8" viewBox="0 0 5 8"><path d="M5 0L5 8L1 4Z" fill="#333"/></svg>
<div class="a" style="left:258px;top:497px;width:675px;height:14px;background:linear-gradient(#f4f4f4,#e8e8e8 50%,#cfcfd4);border:1px solid #a8a8a8;border-radius:2px"></div>
<div class="a" style="left:591px;top:500px;width:1px;height:7px;background:#555;box-shadow:2px 0 0 #555,4px 0 0 #555"></div>
<svg class="a" style="left:1069px;top:500px" width="5" height="8" viewBox="0 0 5 8"><path d="M0 0L0 8L4 4Z" fill="#333"/></svg>
<div class="a" style="left:240px;top:512px;width:857px;height:26px;background:#f4f9fd;border-top:1px solid #e6ecf0"></div>
<div class="a" style="left:590px;top:514px;width:32px;height:22px;background:#cce4f6;"></div>
<div class="t" style="left:473px;top:519px;font-size:12px;color:#1a6ab8;">首页</div>
<div class="t" style="left:505px;top:519px;font-size:12px;color:#1a6ab8;">上一页</div>
<div class="t" style="left:549px;top:519px;font-size:12px;color:#1a6ab8;">下一页</div>
<div class="t" style="left:594px;top:519px;font-size:12px;color:#1a6ab8;">末页</div>
<div class="a" style="left:627px;top:516px;width:1px;height:18px;background:#d8e0e6;"></div>
<div class="t" style="left:634px;top:519px;font-size:12px;color:#1a6ab8;">第<span class="m">&#160;3</span>页<span class="m">/</span>共<span class="m">&#160;5</span>页</div>
<div class="a" style="left:719px;top:516px;width:1px;height:18px;background:#d8e0e6;"></div>
<div class="t" style="left:726px;top:519px;font-size:12px;color:#1a6ab8;">到第</div>
<div class="a" style="left:757px;top:517px;width:35px;height:17px;background:#fff;border:1px solid #c8d0d8"></div>
<div class="t" style="left:760px;top:520px;font-size:10px;color:#333;">3</div>
<div class="t" style="left:797px;top:519px;font-size:12px;color:#1a6ab8;">页<span class="m">&#160;[</span>确定<span class="m">]</span></div>
<div class="a" style="left:861px;top:516px;width:1px;height:18px;background:#d8e0e6;"></div>
<div class="t" style="left:979px;top:519px;font-size:12px;color:#1a6ab8;"><span class="m">21&#160;-&#160;30&#160;&#160;</span>共<span class="m">&#160;44&#160;</span>条</div>
<div class="t" style="left:239px;top:549px;font-size:12px;color:#333;">汇总收入金额：<b style="color:#e00;font-family:'Liberation Mono',monospace;letter-spacing:-0.2px">79,062.52</b></div>
<div class="t" style="left:475px;top:549px;font-size:12px;color:#333;">汇总支出金额：<b style="color:#e00;font-family:'Liberation Mono',monospace;letter-spacing:-0.2px">-61,142.60</b></div>
<div class="a" style="left:548px;top:567px;width:185px;height:25px;background:linear-gradient(#72baf0,#56a6ea 45%,#3e90dc 55%,#3a8ad8);border:1px solid #3a88d0;border-radius:4px;box-shadow:inset 0 1px 0 #a0d4f8"></div>
<div class="t" style="left:548px;top:573px;width:185px;text-align:center;font-size:13px;font-weight:bold;color:#fff;letter-spacing:2px;text-indent:2px">下载本次查询结果</div>
<div class="a" style="left:739px;top:567px;width:50px;height:25px;background:linear-gradient(#72baf0,#56a6ea 45%,#3e90dc 55%,#3a8ad8);border:1px solid #3a88d0;border-radius:4px;box-shadow:inset 0 1px 0 #a0d4f8"></div>
<div class="t" style="left:739px;top:573px;width:50px;text-align:center;font-size:13px;font-weight:bold;color:#fff;letter-spacing:4px;text-indent:4px">关闭</div>
<div class="t" style="left:239px;top:610px;font-size:13px;color:#444;font-weight:bold;">帮助信息</div>
<div class="a" style="left:239px;top:631px;width:859px;height:17px;overflow:hidden"><div class="a" style="left:0;top:0;width:859px;height:40px;background:#fff8d8;border:1px solid #e8c838"></div><div class="t" style="left:15px;top:15px;font-size:12px;color:#444;letter-spacing:0.9px">一查询近期账户一本通交易明细</div></div>
<div class="a" style="left:221px;top:648px;width:905px;height:18px;background:#f8fafa;"></div>
</body></html>
